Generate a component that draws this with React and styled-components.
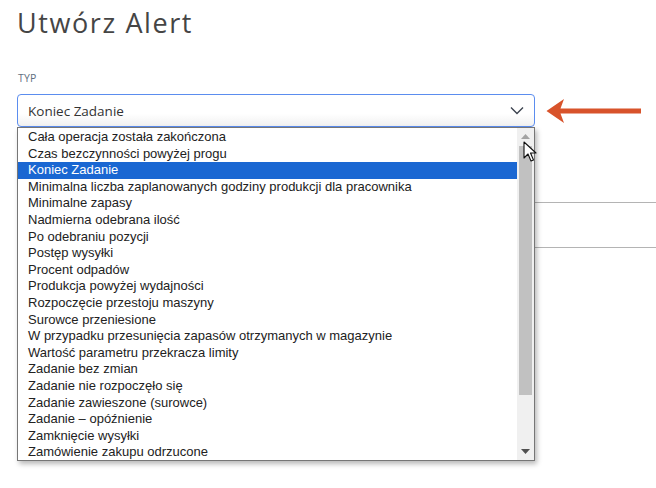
import React from "react";
import styled, { createGlobalStyle } from "styled-components";

const options = [
  "Cała operacja została zakończona",
  "Czas bezczynności powyżej progu",
  "Koniec Zadanie",
  "Minimalna liczba zaplanowanych godziny produkcji dla pracownika",
  "Minimalne zapasy",
  "Nadmierna odebrana ilość",
  "Po odebraniu pozycji",
  "Postęp wysyłki",
  "Procent odpadów",
  "Produkcja powyżej wydajności",
  "Rozpoczęcie przestoju maszyny",
  "Surowce przeniesione",
  "W przypadku przesunięcia zapasów otrzymanych w magazynie",
  "Wartość parametru przekracza limity",
  "Zadanie bez zmian",
  "Zadanie nie rozpoczęło się",
  "Zadanie zawieszone (surowce)",
  "Zadanie – opóźnienie",
  "Zamknięcie wysyłki",
  "Zamówienie zakupu odrzucone",
];

const selected = "Koniec Zadanie";

const GlobalStyle = createGlobalStyle`
  html, body {
    margin: 0;
    padding: 0;
    background: #ffffff;
  }
  body {
    font-family: "Open Sans", "Liberation Sans", sans-serif;
    overflow: hidden;
  }
`;

const Page = styled.div`
  position: relative;
  width: 656px;
  height: 488px;
  padding: 0 0 0 17px;
  box-sizing: border-box;
`;

const Title = styled.h1`
  margin: 0;
  padding-top: 6px;
  font-family: "Open Sans", sans-serif;
  font-size: 27px;
  line-height: 34px;
  font-weight: 400;
  letter-spacing: 1.6px;
  color: #454545;
`;

const Label = styled.div`
  margin-top: 32px;
  padding-left: 1px;
  font-family: "Open Sans", sans-serif;
  font-size: 10.5px;
  line-height: 12px;
  color: #5f6f80;
  letter-spacing: 0.2px;
`;

const FieldRow = styled.div`
  display: flex;
  align-items: center;
  gap: 11px;
  margin-top: 10px;
`;

const SelectWrap = styled.div`
  position: relative;
  width: 518px;
`;

const SelectBox = styled.div`
  display: flex;
  align-items: center;
  justify-content: space-between;
  height: 33px;
  box-sizing: border-box;
  padding: 0 10px 0 10px;
  border: 1px solid #5b8def;
  border-radius: 4px;
  background: linear-gradient(#ffffff 60%, #f1f1f1);
  font-family: "Open Sans", sans-serif;
  font-size: 13.5px;
  color: #333333;
`;

const List = styled.div`
  position: absolute;
  top: 33px;
  left: 0;
  width: 518px;
  height: 334px;
  box-sizing: border-box;
  border: 1px solid #767676;
  background: #ffffff;
  box-shadow: 2px 3px 5px rgba(0, 0, 0, 0.28);
  display: flex;
  z-index: 5;
`;

const Options = styled.div`
  flex: 1;
  padding-top: 1px;
`;

const Option = styled.div`
  height: 16.6px;
  line-height: 16.6px;
  padding-left: 10px;
  font-family: "Liberation Sans", Arial, sans-serif;
  font-size: 13px;
  white-space: nowrap;
  overflow: hidden;
  color: ${(p) => (p.$active ? "#ffffff" : "#222222")};
  background: ${(p) => (p.$active ? "#1a67d2" : "transparent")};
`;

const Scrollbar = styled.div`
  position: relative;
  width: 17px;
  background: #f0f0f0;
  display: flex;
  flex-direction: column;
  align-items: center;
`;

const ScrollArrow = styled.div`
  height: 17px;
  width: 17px;
  display: flex;
  align-items: center;
  justify-content: center;
`;

const Thumb = styled.div`
  width: 13px;
  height: 249px;
  margin-top: 1px;
  background: #c1c1c1;
`;

const Spacer = styled.div`
  flex: 1;
`;

const Cursor = styled.svg`
  position: absolute;
  top: 13px;
  left: 6px;
  z-index: 6;
`;

const Divider = styled.div`
  height: 1px;
  background: #b4b4b4;
  margin-top: ${(p) => p.$gap}px;
`;

const Arrow = () => (
  <svg width="96" height="26" viewBox="0 0 96 26">
    <path d="M0.5 13 L18 1 L14.5 10.5 L95 10.5 L95 15.5 L14.5 15.5 L18 25 Z" fill="#d8532b" />
  </svg>
);

const Chevron = () => (
  <svg width="14" height="9" viewBox="0 0 14 9">
    <path d="M1 1.5 L7 7.5 L13 1.5" fill="none" stroke="#3d4450" strokeWidth="1.4" />
  </svg>
);

const App = () => {
  return (
    <Page>
      <GlobalStyle />
      <Title>Utwórz Alert</Title>
      <Label>TYP</Label>
      <FieldRow>
        <SelectWrap>
          <SelectBox>
            <span>{selected}</span>
            <Chevron />
          </SelectBox>
          <List>
            <Options>
              {options.map((o) => (
                <Option key={o} $active={o === selected}>
                  {o}
                </Option>
              ))}
            </Options>
            <Scrollbar>
              <ScrollArrow>
                <svg width="9" height="5" viewBox="0 0 9 5">
                  <path d="M0 5 L4.5 0 L9 5 Z" fill="#a3a3a3" />
                </svg>
              </ScrollArrow>
              <Thumb />
              <Spacer />
              <ScrollArrow>
                <svg width="9" height="5" viewBox="0 0 9 5">
                  <path d="M0 0 L9 0 L4.5 5 Z" fill="#505050" />
                </svg>
              </ScrollArrow>
              <Cursor width="14" height="22" viewBox="0 0 14 22">
                <path
                  d="M1 1 L1 17 L5 13 L8 20 L10.5 19 L7.5 12 L13 12 Z"
                  fill="#ffffff"
                  stroke="#111111"
                  strokeWidth="1.1"
                  strokeLinejoin="round"
                />
              </Cursor>
            </Scrollbar>
          </List>
        </SelectWrap>
        <Arrow />
      </FieldRow>
      <Divider $gap={75} />
      <Divider $gap={44} />
    </Page>
  );
};

export default App;
